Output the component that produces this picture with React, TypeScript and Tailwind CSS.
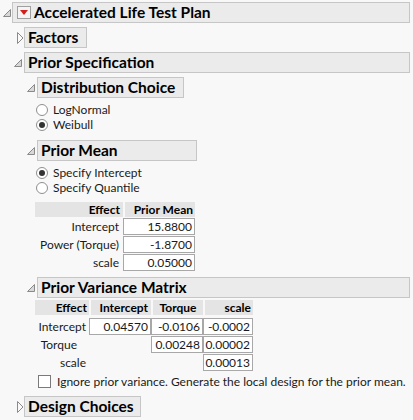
import React from "react";

const OpenTri = () => (
  <svg width="8" height="8" viewBox="0 0 8 8" className="block">
    <path d="M7.5 0.5 L7.5 7.5 L0.5 7.5 Z" fill="#d8d8d8" stroke="#8a8a8a" strokeWidth="1" strokeLinejoin="miter" />
  </svg>
);

const ClosedTri = () => (
  <svg width="7" height="12" viewBox="0 0 7 12" className="block">
    <path d="M0.5 0.5 L6 6 L0.5 11.5 Z" fill="#fafafa" stroke="#8a8a8a" strokeWidth="1" />
  </svg>
);

const Header = ({ children, className = "" }: { children: React.ReactNode; className?: string }) => (
  <div
    className={
      "h-[21px] flex items-center bg-[#ebebeb] border border-[#c6c6c6] text-[15.5px] font-bold text-black leading-none pl-[3px] whitespace-nowrap " +
      className
    }
  >
    {children}
  </div>
);

const Radio = ({ checked, label }: { checked?: boolean; label: string }) => (
  <div className="flex items-center h-[15px]">
    <div className="w-[12px] h-[12px] rounded-full border border-[#8f8f8f] bg-white flex items-center justify-center">
      {checked && <div className="w-[6px] h-[6px] rounded-full bg-[#333]" />}
    </div>
    <span className="ml-[5px] text-[12px] text-[#1a1a1a] leading-none whitespace-nowrap">{label}</span>
  </div>
);

const Cell = ({ v }: { v: string }) => (
  <div className="h-[17px] bg-white border border-[#a8a8a8] flex items-center justify-end pr-[2px] text-[12px] text-[#1a1a1a] leading-none whitespace-nowrap">
    {v}
  </div>
);

export default function App() {
  return (
    <div
      className="w-[413px] h-[420px] bg-[#f8f8f8] overflow-hidden text-black"
      style={{ fontFamily: '"Segoe UI", Lato, "Noto Sans", sans-serif' }}
    >
      <div className="pt-[2px] pr-[3px]">
        {/* Title */}
        <div className="flex items-center">
          <div className="w-[12px] pl-[3px] flex items-center"><OpenTri /></div>
          <Header className="flex-1 pl-[4px]">
            <div className="w-[14px] h-[13px] border border-[#a0a0a0] bg-[#f4f4f4] flex items-center justify-center mr-[3px]">
              <svg width="8" height="5" viewBox="0 0 8 5"><path d="M0 0 L8 0 L4 5 Z" fill="#d0201c" /></svg>
            </div>
            Accelerated Life Test Plan
          </Header>
        </div>

        {/* Factors */}
        <div className="flex items-center mt-[4px]">
          <div className="w-[24px] pl-[17px] flex items-center"><ClosedTri /></div>
          <Header className="w-[63px]">Factors</Header>
        </div>

        {/* Prior Specification */}
        <div className="flex items-center mt-[4px]">
          <div className="w-[24px] pl-[14px] flex items-center"><OpenTri /></div>
          <Header className="flex-1">Prior Specification</Header>
        </div>

        <div className="pl-[27px]">
          {/* Distribution choice */}
          <div className="flex items-center mt-[4px]">
            <div className="w-[10px] flex items-center"><OpenTri /></div>
            <Header className="w-[147px]">Distribution Choice</Header>
          </div>
          <div className="pl-[9px] mt-[4px]">
            <Radio label="LogNormal" />
            <Radio checked label="Weibull" />
          </div>

          {/* Prior Mean */}
          <div className="flex items-center mt-[8px]">
            <div className="w-[10px] flex items-center"><OpenTri /></div>
            <Header className="w-[160px]">Prior Mean</Header>
          </div>
          <div className="pl-[9px] mt-[4px]">
            <Radio checked label="Specify Intercept" />
            <Radio label="Specify Quantile" />
          </div>

          <div className="ml-[8px] mt-[7px] w-[160px] text-[12px] text-[#1a1a1a] whitespace-nowrap">
            <div className="grid grid-cols-[88px_72px] bg-[#e4e4e4] h-[15px] items-center font-bold text-black">
              <div className="text-right pr-[3px] leading-none">Effect</div>
              <div className="border-l-2 border-[#f8f8f8] text-right pr-[2px] leading-none h-full flex items-center justify-end">Prior Mean</div>
            </div>
            <div className="grid grid-cols-[88px_72px] gap-y-[1px] mt-[1px] items-center">
              <div className="text-right pr-[4px] leading-none">Intercept</div>
              <Cell v="15.8800" />
              <div className="text-right pr-[4px] leading-none">Power (Torque)</div>
              <Cell v="-1.8700" />
              <div className="text-right pr-[4px] leading-none">scale</div>
              <Cell v="0.05000" />
            </div>
          </div>

          {/* Prior Variance Matrix */}
          <div className="flex items-center mt-[6px]">
            <div className="w-[10px] flex items-center"><OpenTri /></div>
            <Header className="flex-1">Prior Variance Matrix</Header>
          </div>

          <div className="ml-[8px] mt-[2px] w-[218px] text-[12px] text-[#1a1a1a] whitespace-nowrap">
            <div className="grid grid-cols-[54px_62px_52px_50px] bg-[#e4e4e4] h-[15px] items-center font-bold text-black">
              <div className="text-right pr-[2px] leading-none">Effect</div>
              <div className="border-l-2 border-[#f8f8f8] h-full flex items-center justify-end pr-[3px] leading-none">Intercept</div>
              <div className="border-l-2 border-[#f8f8f8] h-full flex items-center justify-center leading-none">Torque</div>
              <div className="border-l-2 border-[#f8f8f8] h-full flex items-center justify-end pr-[2px] leading-none">scale</div>
            </div>
            <div className="grid grid-cols-[54px_62px_52px_50px] gap-y-[1px] mt-[3px] items-center">
              <div className="text-right pr-[3px] leading-none">Intercept</div>
              <Cell v="0.04570" />
              <Cell v="-0.0106" />
              <Cell v="-0.0002" />
              <div className="text-right pr-[12px] leading-none">Torque</div>
              <div />
              <Cell v="0.00248" />
              <Cell v="0.00002" />
              <div className="text-right pr-[3px] leading-none">scale</div>
              <div />
              <div />
              <Cell v="0.00013" />
            </div>
          </div>

          <div className="flex items-center mt-[4px] ml-[11px]">
            <div className="w-[13px] h-[13px] border border-[#7a7a7a] bg-white shrink-0" />
            <span className="ml-[6px] text-[12px] text-[#1a1a1a] leading-none whitespace-nowrap">
              Ignore prior variance. Generate the local design for the prior mean.
            </span>
          </div>
        </div>

        {/* Design Choices */}
        <div className="flex items-center mt-[8px]">
          <div className="w-[24px] pl-[17px] flex items-center"><ClosedTri /></div>
          <Header className="w-[117px]">Design Choices</Header>
        </div>
      </div>
    </div>
  );
}
